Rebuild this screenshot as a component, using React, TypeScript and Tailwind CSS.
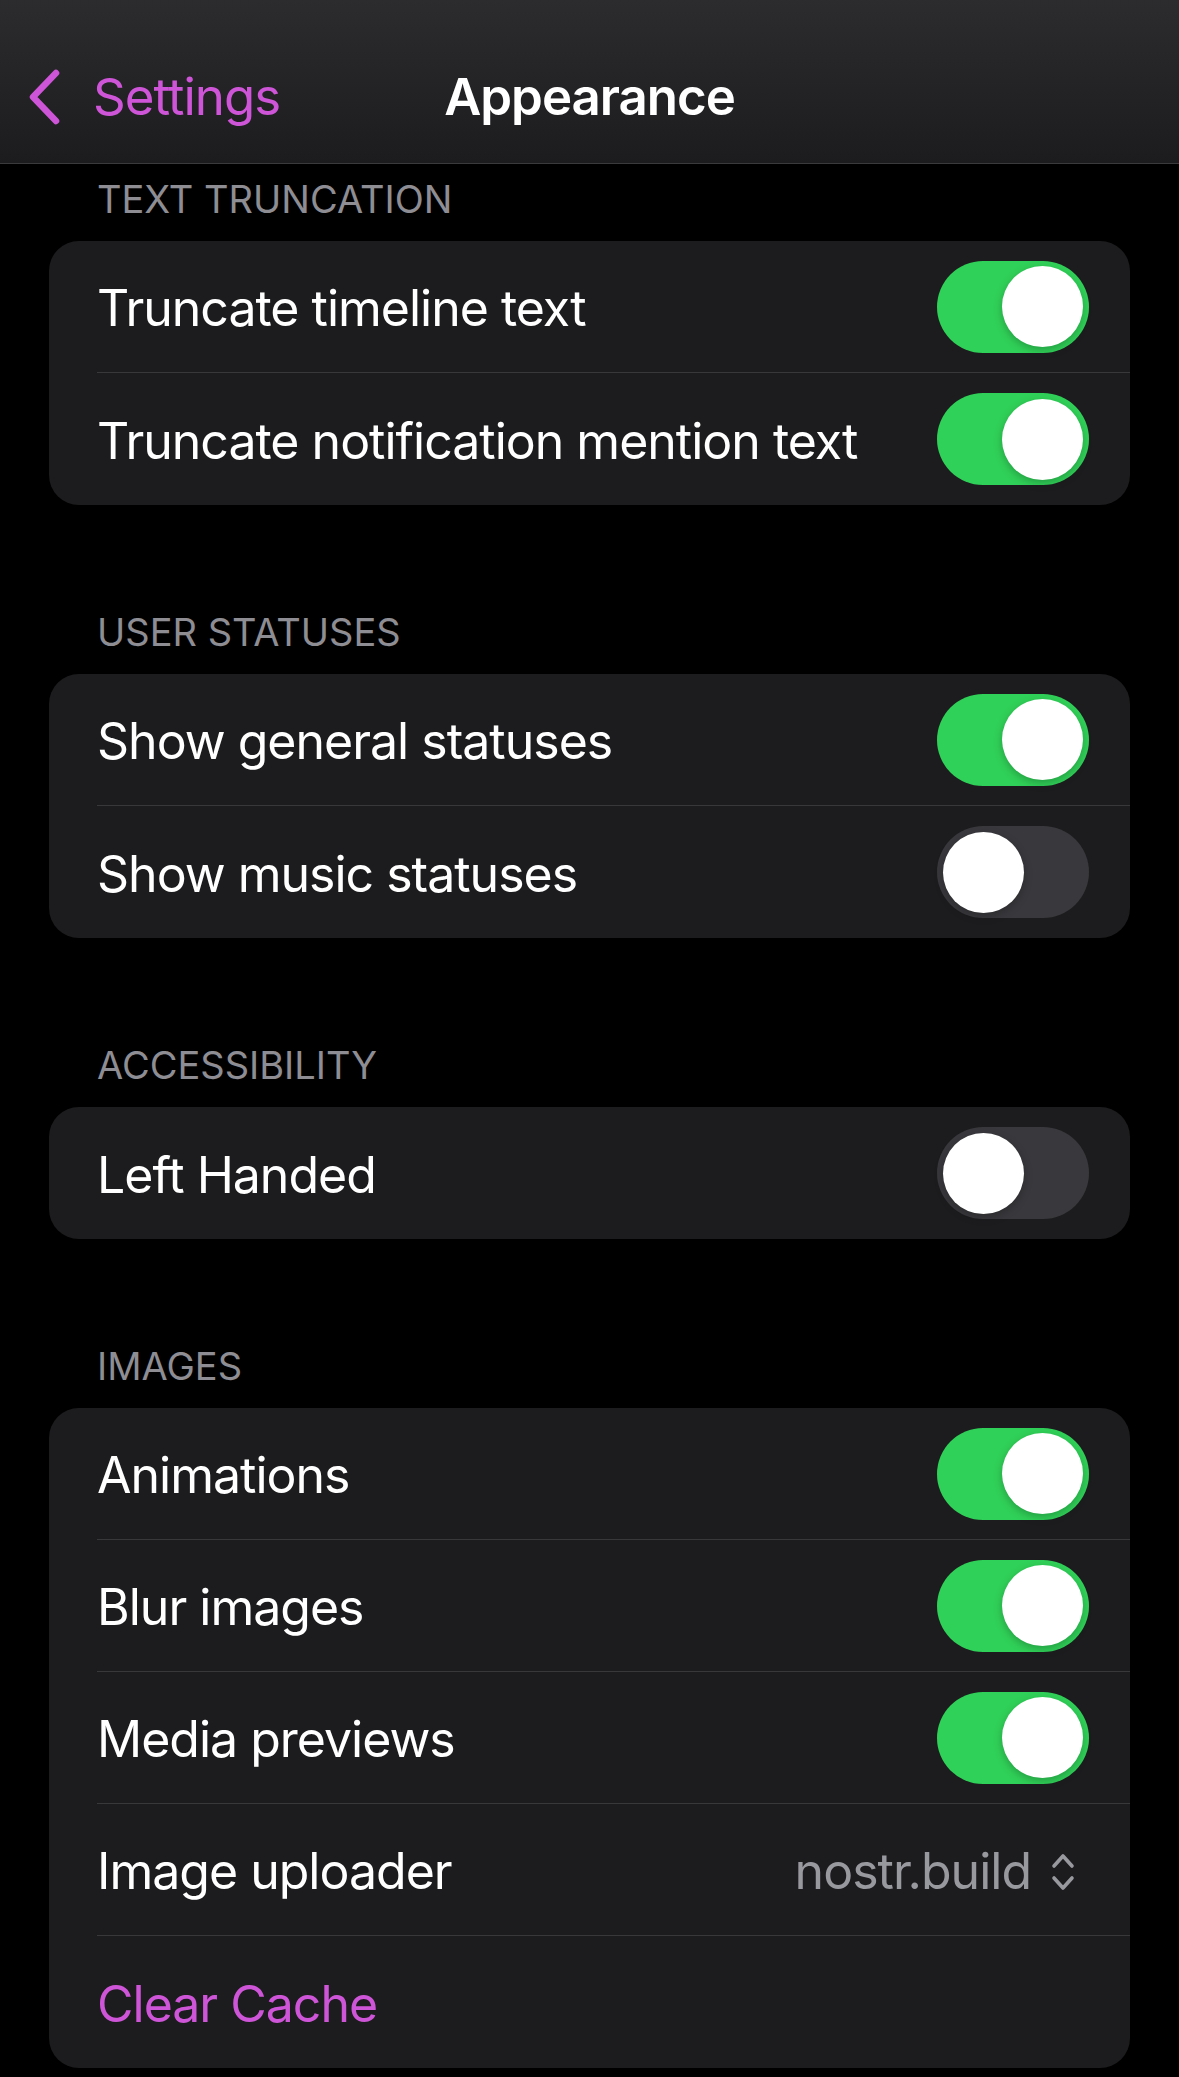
import { useState } from 'react';

type Row =
  | { kind: 'toggle'; label: string; on: boolean }
  | { kind: 'picker'; label: string; value: string }
  | { kind: 'action'; label: string };

const sections: { title: string; rows: Row[] }[] = [
  {
    title: 'TEXT TRUNCATION',
    rows: [
      { kind: 'toggle', label: 'Truncate timeline text', on: true },
      { kind: 'toggle', label: 'Truncate notification mention text', on: true },
    ],
  },
  {
    title: 'USER STATUSES',
    rows: [
      { kind: 'toggle', label: 'Show general statuses', on: true },
      { kind: 'toggle', label: 'Show music statuses', on: false },
    ],
  },
  {
    title: 'ACCESSIBILITY',
    rows: [{ kind: 'toggle', label: 'Left Handed', on: false }],
  },
  {
    title: 'IMAGES',
    rows: [
      { kind: 'toggle', label: 'Animations', on: true },
      { kind: 'toggle', label: 'Blur images', on: true },
      { kind: 'toggle', label: 'Media previews', on: true },
      { kind: 'picker', label: 'Image uploader', value: 'nostr.build' },
      { kind: 'action', label: 'Clear Cache' },
    ],
  },
];

function Toggle({ initial }: { initial: boolean }) {
  const [on, setOn] = useState(initial);
  return (
    <button
      onClick={() => setOn(!on)}
      className={`flex h-[92px] w-[152px] shrink-0 items-center rounded-full px-[6px] ${
        on ? 'justify-end bg-[#30d158]' : 'justify-start bg-[#39393d]'
      }`}
    >
      <span className="block h-[81px] w-[81px] rounded-full bg-white shadow-[0_3px_8px_rgba(0,0,0,0.25)]" />
    </button>
  );
}

function UpDownIcon() {
  return (
    <svg width="24" height="42" viewBox="0 0 24 42" fill="none" stroke="#98989f" strokeWidth="3.6" strokeLinecap="round" strokeLinejoin="round">
      <path d="M3 15 L12 5 L21 15" />
      <path d="M3 27 L12 37 L21 27" />
    </svg>
  );
}

export default function App() {
  return (
    <div className="min-h-[2077px] bg-black font-['Inter','Noto_Sans',sans-serif] text-white">
      {/* Nav bar */}
      <div className="flex h-[164px] flex-col justify-end border-b border-[#3a3a3c] bg-gradient-to-b from-[#2c2c2e] to-[#1c1c1e]">
        <div className="grid h-[132px] grid-cols-[1fr_auto_1fr] items-center">
          <div className="flex items-center pl-[27px] text-[#cf55d8]">
            <svg width="36" height="56" viewBox="0 0 36 56" fill="none" stroke="#cf55d8" strokeWidth="6.5" strokeLinecap="round" strokeLinejoin="round">
              <path d="M29 4 L6 28 L29 52" />
            </svg>
            <span className="ml-[30px] text-[51px] tracking-[-0.02em]">Settings</span>
          </div>
          <div className="text-[51px] font-semibold tracking-[-0.02em]">Appearance</div>
          <div />
        </div>
      </div>

      <div className="px-[49px] pb-[10px]">
        {sections.map((section, i) => (
          <div key={section.title} className={i === 0 ? 'mt-[11px]' : 'mt-[103px]'}>
            <div className="pl-[48px] text-[38px] leading-[48px] text-[#8d8d93]">{section.title}</div>
            <div className="mt-[18px] overflow-hidden rounded-[30px] bg-[#1c1c1e]">
              {section.rows.map((row, j) => (
                <div key={row.label} className="pl-[48px]">
                  <div
                    className={`flex h-[132px] items-center justify-between pr-[41px] ${
                      j < section.rows.length - 1 ? 'border-b border-[#38383a]' : ''
                    }`}
                  >
                    <span
                      className={`mt-[4px] text-[50px] tracking-[-0.02em] ${
                        row.kind === 'action' ? 'text-[#cf55d8]' : 'text-white'
                      }`}
                    >
                      {row.label}
                    </span>
                    {row.kind === 'toggle' && <Toggle initial={row.on} />}
                    {row.kind === 'picker' && (
                      <div className="mt-[4px] flex items-center gap-[20px] pr-[14px]">
                        <span className="text-[50px] tracking-[-0.02em] text-[#98989f]">{row.value}</span>
                        <UpDownIcon />
                      </div>
                    )}
                  </div>
                </div>
              ))}
            </div>
          </div>
        ))}
      </div>
    </div>
  );
}
